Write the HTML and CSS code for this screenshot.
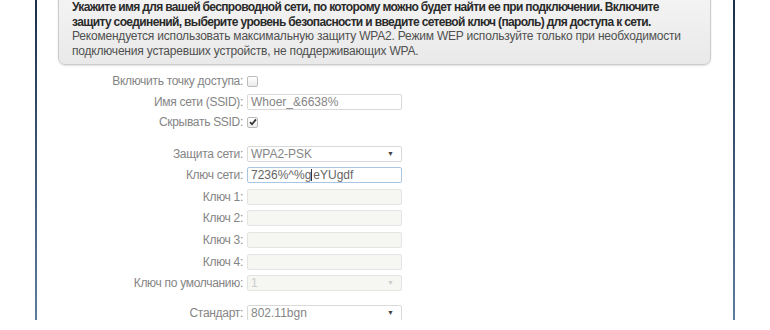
FILE: index.html
```html
<!DOCTYPE html>
<html lang="ru">
<head>
    <meta charset="UTF-8">
    <title>Беспроводная сеть</title>
    <link rel="stylesheet" href="styles.css">
</head>
<body>
    <div class="frame">
        <div class="info">
            <p class="info-main">Укажите имя для вашей беспроводной сети, по которому можно будет найти ее при подключении. Включите<br>защиту соединений, выберите уровень безопасности и введите сетевой ключ (пароль) для доступа к сети.</p>
            <p class="info-note">Рекомендуется использовать максимальную защиту WPA2. Режим WEP используйте только при необходимости<br>подключения устаревших устройств, не поддерживающих WPA.</p>
        </div>

        <div class="form">
            <div class="row compact">
                <label>Включить точку доступа:</label>
                <span class="check"></span>
            </div>
            <div class="row compact">
                <label>Имя сети (SSID):</label>
                <div class="field">Whoer_&amp;6638%</div>
            </div>
            <div class="row compact">
                <label>Скрывать SSID:</label>
                <span class="check">
                    <svg width="8" height="8" viewBox="0 0 8 8"><path d="M1 4.2 L3 6.3 L7 1.4" fill="none" stroke="#333" stroke-width="1.7"/></svg>
                </span>
            </div>

            <div class="spacer"></div>

            <div class="row">
                <label>Защита сети:</label>
                <div class="field select">WPA2-PSK<span class="arrow">▼</span></div>
            </div>
            <div class="row">
                <label>Ключ сети:</label>
                <div class="field focus">7236%^%g<span class="caret"></span>eYUgdf</div>
            </div>
            <div class="row">
                <label>Ключ 1:</label>
                <div class="field disabled"></div>
            </div>
            <div class="row">
                <label>Ключ 2:</label>
                <div class="field disabled"></div>
            </div>
            <div class="row">
                <label>Ключ 3:</label>
                <div class="field disabled"></div>
            </div>
            <div class="row">
                <label>Ключ 4:</label>
                <div class="field disabled"></div>
            </div>
            <div class="row">
                <label>Ключ по умолчанию:</label>
                <div class="field select disabled">1<span class="arrow">▼</span></div>
            </div>

            <div class="spacer small"></div>

            <div class="row">
                <label>Стандарт:</label>
                <div class="field select">802.11bgn<span class="arrow">▼</span></div>
            </div>
            <div class="row last">
                <label></label>
                <div class="field select">10<span class="arrow">▼</span></div>
            </div>
        </div>
    </div>
</body>
</html>
```

FILE: styles.css
```css
body {
    margin: 0;
    background: #fff;
    font-family: "Liberation Sans", Arial, sans-serif;
    overflow: hidden;
}

.frame {
    margin: 0 35px;
    height: 340px;
    border-left: 2px solid;
    border-right: 2px solid;
    border-image: linear-gradient(#172a45, #5d7d9c) 1;
    background: #fff;
}

.info {
    margin: -20px 22px 0 21px;
    padding: 19px 10px 6px 13px;
    border: 1px solid #cbcbcb;
    border-radius: 0 0 7px 7px;
    background: linear-gradient(#f6f6f6, #e9e9e9);
    box-shadow: 0 1px 2px rgba(0, 0, 0, 0.12);
    font-size: 12px;
    line-height: 14.5px;
}

.info p {
    margin: 0;
}

.info-main {
    color: #2a2a2a;
    font-weight: bold;
    letter-spacing: -0.65px;
}

.info-note {
    color: #505050;
    letter-spacing: -0.2px;
}

.form {
    margin-top: 6px;
}

.row {
    display: flex;
    align-items: center;
    height: 21.6px;
}

.row.compact {
    height: 20.6px;
}

.row label {
    width: 206px;
    text-align: right;
    padding-right: 4px;
    color: #858585;
    font-size: 12px;
    letter-spacing: -0.3px;
}

.spacer {
    height: 10px;
}

.spacer.small {
    height: 8px;
}

.check {
    display: flex;
    align-items: center;
    justify-content: center;
    width: 9px;
    height: 9px;
    border: 1px solid #bbb;
    border-radius: 2px;
    background: linear-gradient(#fff, #ececec);
}

.field {
    position: relative;
    box-sizing: border-box;
    width: 155px;
    height: 16px;
    padding: 0 3px;
    border: 1px solid #d9d9d9;
    border-radius: 2px;
    font-size: 12px;
    line-height: 14px;
    color: #858585;
    background: #fff;
}

.row.last {
    align-items: flex-start;
    padding-top: 3px;
}

.field.focus {
    border-color: #a9c6e4;
    color: #666;
}

.caret {
    display: inline-block;
    width: 1px;
    height: 12px;
    margin: 0 1px -2px 0;
    background: #333;
}

.field.disabled {
    background: #f6f6f3;
    border-color: #e4e4e4;
    color: #ccc;
}

.arrow {
    position: absolute;
    right: 7px;
    top: 0;
    font-size: 7px;
    color: #444;
}

.disabled .arrow {
    color: #ccc;
}
```
